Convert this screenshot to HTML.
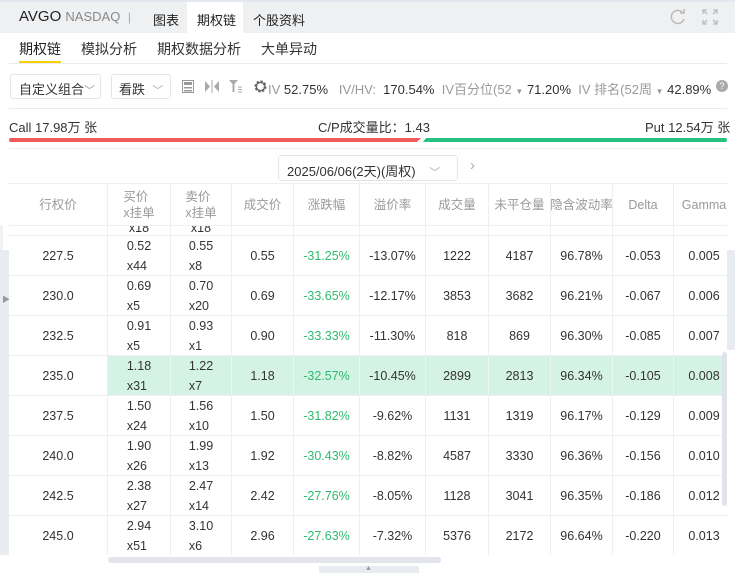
<!DOCTYPE html>
<html><head><meta charset="utf-8"><style>
*{margin:0;padding:0;box-sizing:border-box}
body{width:735px;height:573px;overflow:hidden;background:#fff;font-family:"Liberation Sans","Noto Sans CJK SC",sans-serif;color:#333;position:relative;font-size:13px}
.a{position:absolute;white-space:nowrap}
.top{left:0;top:0;width:735px;height:33px;background:#eff0f2;border-top:2px solid #e3e7ee}
.gray{color:#999}
.r{position:absolute;left:0;display:flex;height:40px;border-bottom:1px solid #edeff2}
.r>div{flex:none;border-right:1px solid #edeff2;display:flex;flex-direction:column;justify-content:center;align-items:center;font-size:12.5px;line-height:20px;color:#333}
.r>div:nth-child(1){width:99px}.r>div:nth-child(2){width:63px}.r>div:nth-child(3){width:61px}.r>div:nth-child(4){width:62px}.r>div:nth-child(5){width:66px}.r>div:nth-child(6){width:66px}.r>div:nth-child(7){width:63px}.r>div:nth-child(8){width:62px}.r>div:nth-child(9){width:62px}.r>div:nth-child(10){width:61px}.r>div:nth-child(11){width:61px}
.hd>div{color:#999;line-height:16px}
.g{color:#2dbb6e!important}
.hl>div{background:#d5f3e5;border-right-color:#e8f7ef}
.hl>div:first-child{background:#fff;border-right-color:#edeff2}
</style></head><body>
<div class="a top"></div>
<div class="a" style="left:187px;top:2px;width:56px;height:31px;background:#fff"></div>
<div class="a" style="left:19px;top:8px;font-size:15px;color:#222">AVGO <span style="font-size:13px;color:#888">NASDAQ</span> <span style="color:#aaa;font-size:12px">&nbsp;|</span></div>
<div class="a" style="left:153px;top:10px;font-size:13px;color:#222">图表</div>
<div class="a" style="left:197px;top:10px;font-size:13px;color:#222">期权链</div>
<div class="a" style="left:253px;top:10px;font-size:13px;color:#222">个股资料</div>
<svg class="a" style="left:669px;top:8px" width="18" height="18" viewBox="0 0 18 18"><path d="M14 5A6.5 6.5 0 1 0 15 11" fill="none" stroke="#bbb" stroke-width="1.5"/><path d="M11 5h4V1" fill="none" stroke="#bbb" stroke-width="1.5"/></svg>
<svg class="a" style="left:702px;top:9px" width="16" height="16" viewBox="0 0 16 16" fill="none" stroke="#bbb" stroke-width="1.3"><path d="M1 5V1h4M11 1h4v4M15 11v4h-4M5 15H1v-4M1 1l4 4M15 1l-4 4M15 15l-4-4M1 15l4-4"/></svg>

<div class="a" style="left:19px;top:39px;font-size:14px;color:#222">期权链</div>
<div class="a" style="left:19px;top:61px;width:42px;height:2px;background:#f5d000"></div>
<div class="a" style="left:81px;top:39px;font-size:14px;color:#333">模拟分析</div>
<div class="a" style="left:157px;top:39px;font-size:14px;color:#333">期权数据分析</div>
<div class="a" style="left:261px;top:39px;font-size:14px;color:#333">大单异动</div>
<div class="a" style="left:9px;top:63px;width:718px;height:1px;background:#e8eaed"></div>

<div class="a" style="left:10px;top:74px;width:91px;height:25px;border:1px solid #e3e5e8;border-radius:3px;padding:4px 0 0 8px;font-size:13px">自定义组合<span style="color:#999;font-size:11px">﹀</span></div>
<div class="a" style="left:111px;top:74px;width:60px;height:25px;border:1px solid #e3e5e8;border-radius:3px;padding:4px 0 0 7px;font-size:13px">看跌 &nbsp;<span style="color:#aaa;font-size:11px">﹀</span></div>
<svg class="a" style="left:182px;top:80px" width="12" height="13"><rect x="0.5" y="0.5" width="11" height="12" fill="none" stroke="#999"/><rect x="2" y="2" width="8" height="3" fill="#999"/><rect x="2" y="7" width="8" height="1.5" fill="#999"/><rect x="2" y="10" width="8" height="1.5" fill="#999"/></svg>
<svg class="a" style="left:205px;top:80px" width="14" height="13"><path d="M0 1l5 5.5L0 12z M14 1L9 6.5 14 12z" fill="#aaa"/><rect x="6.5" y="0" width="1" height="13" fill="#aaa"/></svg>
<svg class="a" style="left:229px;top:80px" width="14" height="13"><path d="M0 0h9L5.5 4v8H3.5V4z" fill="#aaa"/><path d="M9 7h4M9 9.5h4M9 12h4" stroke="#aaa"/></svg>
<svg class="a" style="left:253px;top:79px" width="15" height="15" viewBox="0 0 16 16"><circle cx="8" cy="8" r="5" fill="none" stroke="#666" stroke-width="3" stroke-dasharray="2.2 1.7"/><circle cx="8" cy="8" r="4.5" fill="none" stroke="#666" stroke-width="1.5"/></svg>
<div class="a" style="left:268px;top:79px;font-size:13px"><span class="gray">IV</span> 52.75% &nbsp;&nbsp;<span class="gray">IV/HV:</span> &nbsp;170.54% &nbsp;<span class="gray">IV百分位(52</span> <span class="gray" style="font-size:8px">▼</span> 71.20% &nbsp;<span class="gray">IV 排名(52周</span> <span class="gray" style="font-size:8px">▼</span> 42.89%</div>
<div class="a" style="left:716px;top:80px;width:12px;height:12px;border-radius:50%;background:#aaa;color:#fff;font-size:9px;text-align:center;line-height:12px">?</div>
<div class="a" style="left:9px;top:108px;width:718px;height:1px;background:#e8eaed"></div>

<div class="a" style="left:9px;top:117px;font-size:13px">Call 17.98万 张</div>
<div class="a" style="left:318px;top:117px;font-size:13px">C/P成交量比：1.43</div>
<div class="a" style="left:645px;top:117px;font-size:13px">Put 12.54万 张</div>
<div class="a" style="left:9px;top:138px;width:412px;height:4px;background:#f05a5a;border-radius:2px 0 0 2px;clip-path:polygon(0 0,100% 0,99% 100%,0 100%)"></div>
<div class="a" style="left:423px;top:138px;width:304px;height:4px;background:#26c281;border-radius:0 2px 2px 0;clip-path:polygon(1% 0,100% 0,100% 100%,0 100%)"></div>
<div class="a" style="left:9px;top:148px;width:718px;height:1px;background:#eef0f3"></div>

<div class="a" style="left:278px;top:155px;width:180px;height:26px;border:1px solid #e3e5e8;border-radius:3px;padding:5px 0 0 8px;font-size:13px">2025/06/06(2天)(周权) <span style="color:#aaa;margin-left:10px;font-size:11px">﹀</span></div>
<div class="a" style="left:470px;top:157px;color:#aaa;font-size:15px">›</div>

<div class="a" style="left:0;top:225px;width:3px;height:25px;background:#f0f2f5"></div>
<div class="a" style="left:0;top:250px;width:9px;height:305px;background:#e8ebf0"></div>
<div class="a" style="left:2px;top:294px;color:#999;font-size:8px">▶</div>
<div class="a" style="left:727px;top:250px;width:8px;height:100px;background:#e8ebf0"></div>

<div class="a" style="left:9px;top:183px;width:718px;height:372px;overflow:hidden;border-top:1px solid #edeff2">
<div class="r hd" style="top:0;height:42px"><div>行权价</div><div>买价<br>x挂单</div><div>卖价<br>x挂单</div><div>成交价</div><div>涨跌幅</div><div>溢价率</div><div>成交量</div><div>未平仓量</div><div>隐含波动率</div><div>Delta</div><div>Gamma</div></div>
<div class="r" style="top:42px;height:10px;overflow:hidden"><div></div><div style="justify-content:flex-end;line-height:10px"><span style="margin-bottom:2px">x18</span></div><div style="justify-content:flex-end;line-height:10px"><span style="margin-bottom:2px">x18</span></div><div></div><div></div><div></div><div></div><div></div><div></div><div></div><div></div></div>
<div class="r" style="top:52px"><div>227.5</div><div>0.52<br>x44</div><div>0.55<br>x8</div><div>0.55</div><div class="g">-31.25%</div><div>-13.07%</div><div>1222</div><div>4187</div><div>96.78%</div><div>-0.053</div><div>0.005</div></div>
<div class="r" style="top:92px"><div>230.0</div><div>0.69<br>x5</div><div>0.70<br>x20</div><div>0.69</div><div class="g">-33.65%</div><div>-12.17%</div><div>3853</div><div>3682</div><div>96.21%</div><div>-0.067</div><div>0.006</div></div>
<div class="r" style="top:132px"><div>232.5</div><div>0.91<br>x5</div><div>0.93<br>x1</div><div>0.90</div><div class="g">-33.33%</div><div>-11.30%</div><div>818</div><div>869</div><div>96.30%</div><div>-0.085</div><div>0.007</div></div>
<div class="r hl" style="top:172px"><div>235.0</div><div>1.18<br>x31</div><div>1.22<br>x7</div><div>1.18</div><div class="g">-32.57%</div><div>-10.45%</div><div>2899</div><div>2813</div><div>96.34%</div><div>-0.105</div><div>0.008</div></div>
<div class="r" style="top:212px"><div>237.5</div><div>1.50<br>x24</div><div>1.56<br>x10</div><div>1.50</div><div class="g">-31.82%</div><div>-9.62%</div><div>1131</div><div>1319</div><div>96.17%</div><div>-0.129</div><div>0.009</div></div>
<div class="r" style="top:252px"><div>240.0</div><div>1.90<br>x26</div><div>1.99<br>x13</div><div>1.92</div><div class="g">-30.43%</div><div>-8.82%</div><div>4587</div><div>3330</div><div>96.36%</div><div>-0.156</div><div>0.010</div></div>
<div class="r" style="top:292px"><div>242.5</div><div>2.38<br>x27</div><div>2.47<br>x14</div><div>2.42</div><div class="g">-27.76%</div><div>-8.05%</div><div>1128</div><div>3041</div><div>96.35%</div><div>-0.186</div><div>0.012</div></div>
<div class="r" style="top:332px"><div>245.0</div><div>2.94<br>x51</div><div>3.10<br>x6</div><div>2.96</div><div class="g">-27.63%</div><div>-7.32%</div><div>5376</div><div>2172</div><div>96.64%</div><div>-0.220</div><div>0.013</div></div>
<div class="r" style="top:372px"><div></div><div></div><div></div><div></div><div></div><div></div><div></div><div></div><div></div><div></div><div></div></div>
</div>
<div class="a" style="left:722px;top:352px;width:5px;height:154px;background:#e0e4ea;border-radius:3px"></div>
<div class="a" style="left:108px;top:557px;width:333px;height:6px;background:#e2e6ec;border-radius:3px"></div>
<div class="a" style="left:319px;top:566px;width:100px;height:7px;background:#e8ebf0"></div>
<div class="a" style="left:365px;top:565px;color:#999;font-size:7px">▲</div>
</body></html>
